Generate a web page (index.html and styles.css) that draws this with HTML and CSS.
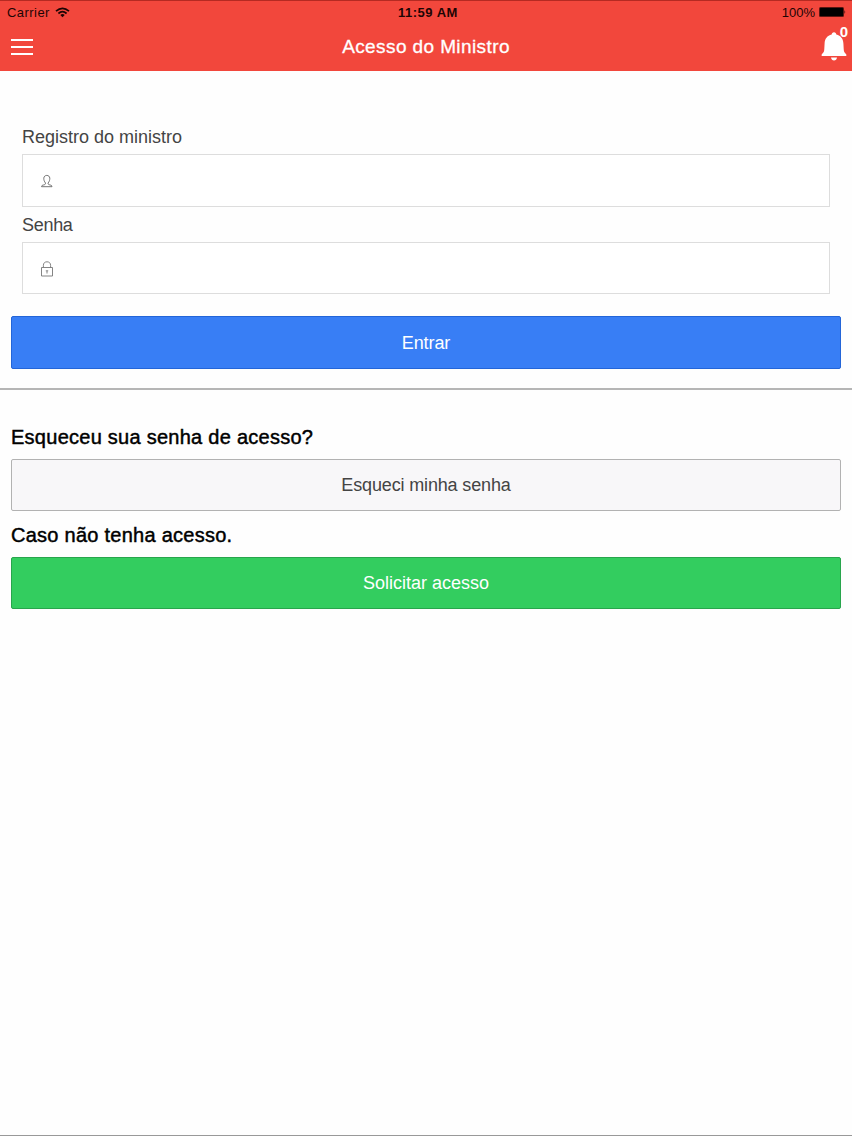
FILE: index.html
```
<!DOCTYPE html>
<html lang="pt-br">
<head>
<meta charset="UTF-8">
<meta name="viewport" content="width=device-width, initial-scale=1.0">
<title>Acesso do Ministro</title>
<link rel="stylesheet" href="styles.css">
</head>
<body>
<header class="header">
  <div class="status-bar">
    <div class="status-left">
      <span class="carrier">Carrier</span>
      <svg class="wifi" width="15" height="11" viewBox="0 0 15 11">
        <path d="M1 4.2 Q7.5 -1.6 14 4.2 M3.4 6.5 Q7.5 2.9 11.6 6.5" fill="none" stroke="#1d0504" stroke-width="1.7"/>
        <path d="M5.3 8 Q7.5 6.2 9.7 8 L7.5 10.3 Z" fill="#1d0504"/>
      </svg>
    </div>
    <span class="clock">11:59 AM</span>
    <div class="status-right">
      <span class="percent">100%</span>
      <svg class="battery" width="27" height="10" viewBox="0 0 27 10">
        <rect x="0" y="0" width="25" height="10" rx="1.5" fill="#5a1712"/>
        <rect x="1" y="1" width="23" height="8" rx="0.5" fill="#000"/>
        <path d="M25.5 3 Q27 5 25.5 7 Z" fill="#1d0504"/>
      </svg>
    </div>
  </div>
  <div class="nav-bar">
    <button class="menu-btn" aria-label="Menu"><span></span><span></span><span></span></button>
    <h1 class="title">Acesso do Ministro</h1>
    <button class="bell-btn" aria-label="Avisos">
      <svg width="26" height="30" viewBox="0 0 26 30" fill="#fff">
        <path d="M13 0.2 C14.4 0.2 15.3 1.2 15.3 2.6 C19.8 3.6 22.2 7 22.4 11.5 L22.7 17 C22.8 19.5 23.5 20.8 25 22 Q25.6 22.6 25.3 24 H0.7 Q0.4 22.6 1 22 C2.5 20.8 3.2 19.5 3.3 17 L3.6 11.5 C3.8 7 6.2 3.6 10.7 2.6 C10.7 1.2 11.6 0.2 13 0.2 Z"/>
        <path d="M10 25.6 H16 Q15.5 28.6 13 28.6 Q10.5 28.6 10 25.6 Z"/>
      </svg>
      <span class="badge">0</span>
    </button>
  </div>
</header>

<main>
  <form class="login">
    <label for="registro">Registro do ministro</label>
    <div class="field">
      <svg width="12" height="14" viewBox="0 0 12 14" fill="none" stroke="#666" stroke-width="0.9">
        <path d="M4.5 9 C3.3 7.6 2.7 5.8 2.8 4.2 C2.9 2.4 4.2 1.4 5.8 1.4 C7.4 1.4 8.7 2.4 8.8 4.2 C8.9 5.8 8.3 7.6 7.1 9 C7 10.3 7.6 10.6 8.8 10.9 C10.4 11.3 11 11.5 11 12.7 H0.5 C0.5 11.5 1.2 11.3 2.8 10.9 C4 10.6 4.6 10.3 4.5 9 Z"/>
      </svg>
      <input type="text" id="registro">
    </div>
    <label for="senha" class="label-senha">Senha</label>
    <div class="field">
      <svg width="12" height="16" viewBox="0 0 12 16" fill="none" stroke="#777" stroke-width="0.9">
        <path d="M0.5 6.5 H11.5 V15 H0.5 Z M2.4 6.5 V4.3 C2.4 2 3.9 0.8 6 0.8 C8.1 0.8 9.6 2 9.6 4.3 V6.5"/>
        <path d="M6 10 V12.5 M4.8 9.8 H7.2"/>
      </svg>
      <input type="password" id="senha">
    </div>
  </form>
  <button class="btn btn-blue">Entrar</button>
  <hr>
  <h2>Esqueceu sua senha de acesso?</h2>
  <button class="btn btn-light">Esqueci minha senha</button>
  <h2 class="second">Caso não tenha acesso.</h2>
  <button class="btn btn-green">Solicitar acesso</button>
</main>
</body>
</html>
```

FILE: styles.css
```
* {
  box-sizing: border-box;
}
body {
  display: flex;
  flex-direction: column;
  height: 1136px;
  margin: 0;
  font-family: "Liberation Sans", Arial, sans-serif;
  background-color: #fefefe;
  border-bottom: 1px solid #999;
}
button {
  font-family: inherit;
  cursor: pointer;
}
.header {
  height: 71px;
  background-color: #f2473c;
  border-top: 1px solid #b52a22;
}
.status-bar {
  display: grid;
  grid-template-columns: 1fr auto 1fr;
  align-items: center;
  height: 22px;
  padding: 0 6px 0 7px;
  font-size: 13px;
  color: #1d0504;
}
.status-left, .status-right {
  display: flex;
  align-items: center;
}
.status-left {
  gap: 5px;
}
.status-right {
  justify-content: flex-end;
  gap: 4px;
}
.carrier {
  letter-spacing: 0.45px;
}
.clock {
  margin-left: 3px;
  font-weight: bold;
  letter-spacing: 0.5px;
}
.nav-bar {
  display: grid;
  grid-template-columns: 1fr auto 1fr;
  align-items: center;
  height: 48px;
  padding: 0 5px;
}
.menu-btn {
  display: flex;
  flex-direction: column;
  gap: 5px;
  width: 22px;
  margin-left: 6px;
  padding: 0;
  background: none;
  border: none;
}
.menu-btn span {
  height: 2px;
  background-color: #fff;
}
.title {
  margin: 0;
  font-size: 19px;
  font-weight: normal;
  letter-spacing: 0.4px;
  color: #fff;
  -webkit-text-stroke: 0.3px #fff;
}
.bell-btn {
  position: relative;
  justify-self: end;
  width: 26px;
  height: 30px;
  padding: 0;
  background: none;
  border: none;
}
.bell-btn svg {
  display: block;
}
.badge {
  position: absolute;
  top: -9px;
  right: -1px;
  font-size: 15px;
  font-weight: bold;
  line-height: 17px;
  color: #fff;
}
.login {
  padding: 56px 22px 0;
}
.login label {
  display: block;
  height: 27px;
  font-size: 18px;
  line-height: 21px;
  color: #444;
}
.login .label-senha {
  margin-top: 8px;
  letter-spacing: -0.3px;
}
.field {
  display: flex;
  align-items: center;
  gap: 12px;
  height: 53px;
  padding: 1px 18px 0;
  background-color: #fff;
  border: 1px solid #ddd;
}
.label-senha + .field {
  height: 52px;
}
.field input {
  flex: 1;
  padding: 0;
  font-size: 16px;
  background: none;
  border: none;
  outline: none;
}
.btn {
  display: block;
  width: calc(100% - 22px);
  height: 52px;
  margin: 0 11px;
  padding: 0;
  font-size: 18px;
  border: 1px solid;
  border-radius: 2px;
}
.btn-blue {
  height: 53px;
  margin-top: 22px;
  padding-top: 1px;
  letter-spacing: -0.1px;
  color: #fff;
  background-color: #387ef5;
  border-color: #2365d8;
}
.btn-light {
  letter-spacing: -0.15px;
  color: #444;
  background-color: #f8f7f9;
  border-color: #b2b2b2;
}
.btn-green {
  color: #fff;
  background-color: #33cd5f;
  border-color: #28a54c;
}
hr {
  height: 2px;
  margin: 19px 0 35px;
  border: none;
  background-color: #b5b5b5;
}
h2 {
  height: 34px;
  margin: 0 11px;
  font-size: 20px;
  font-weight: normal;
  line-height: 24px;
  letter-spacing: 0.26px;
  color: #000;
  -webkit-text-stroke: 0.45px #000;
}
h2.second {
  margin-top: 12px;
}
```
